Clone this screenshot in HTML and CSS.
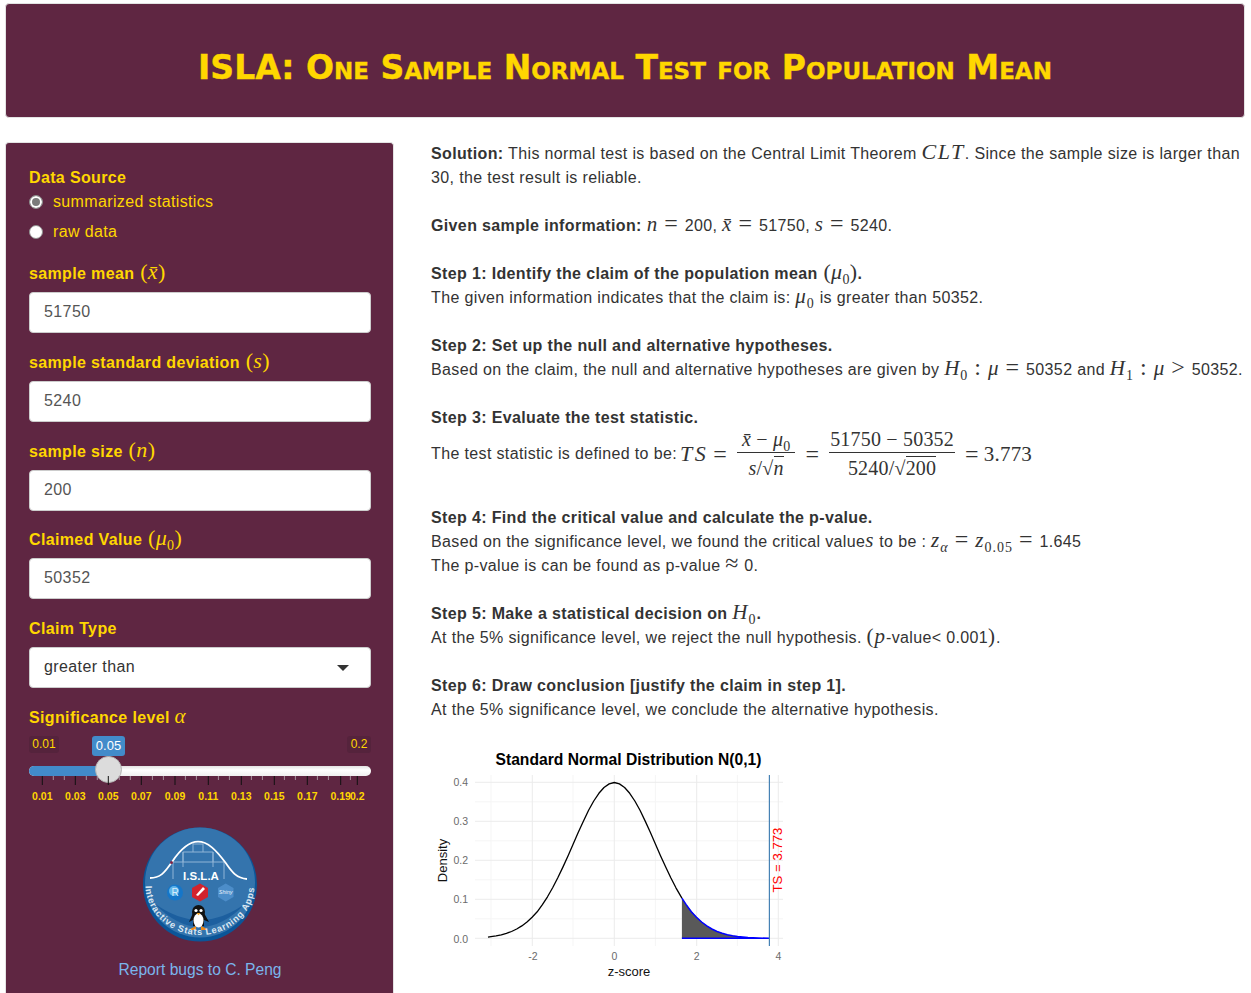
FILE: index.html
```html
<!DOCTYPE html>
<html lang="en">
<head>
    <meta charset="UTF-8">
    <meta name="viewport" content="width=device-width, initial-scale=1.0">
    <title>ISLA: One Sample Normal Test for Population Mean</title>
    <link rel="stylesheet" href="styles.css">
</head>
<body>
    <header class="title-panel">
        <h1 class="app-title">ISLA: One Sample Normal Test for Population Mean</h1>
    </header>

    <div class="layout">
        <aside class="sidebar">
            <div class="form-group">
                <div class="field-label tight">Data Source</div>
                <label class="radio-row"><input type="radio" name="source" checked><span>summarized statistics</span></label>
                <label class="radio-row"><input type="radio" name="source"><span>raw data</span></label>
            </div>

            <div class="form-group">
                <div class="field-label">sample mean <span class="m paren">(<i>x̄</i>)</span></div>
                <input class="text-input" type="text" value="51750">
            </div>

            <div class="form-group">
                <div class="field-label">sample standard deviation <span class="m paren">(<i>s</i>)</span></div>
                <input class="text-input" type="text" value="5240">
            </div>

            <div class="form-group short">
                <div class="field-label">sample size <span class="m paren">(<i>n</i>)</span></div>
                <input class="text-input" type="text" value="200">
            </div>

            <div class="form-group">
                <div class="field-label">Claimed Value <span class="m paren">(<i>μ</i><sub>0</sub>)</span></div>
                <input class="text-input" type="text" value="50352">
            </div>

            <div class="form-group">
                <div class="field-label">Claim Type</div>
                <div class="select-box">greater than</div>
            </div>

            <div class="form-group last">
                <div class="field-label">Significance level <span class="m"><i>α</i></span></div>
                <div class="slider">
                    <span class="slider-edge min">0.01</span>
                    <span class="slider-edge max">0.2</span>
                    <span class="slider-value">0.05</span>
                    <div class="slider-track"><div class="slider-fill"></div></div>
                    <div class="slider-handle"></div>
                    <svg class="slider-ticks" width="342" height="30" viewBox="0 0 342 30">
                        <path d="M24.3 0v4M35.3 0v4M57.3 0v4M68.3 0v4M90.3 0v4M101.3 0v4M123.4 0v4M134.4 0v4M156.4 0v4M167.4 0v4M189.4 0v4M200.4 0v4M222.4 0v4M233.4 0v4M255.4 0v4M266.4 0v4M288.4 0v4M299.4 0v4M321.4 0v4" stroke="#a5909b" fill="none"/>
                        <path d="M13.3 0v9M46.3 0v9M79.3 0v9M112.3 0v9M146 0v9M179.3 0v9M212.3 0v9M245.3 0v9M278.3 0v9M311.7 0v9M328.3 0v9" stroke="#111" fill="none"/>
                        <g class="tick-text">
                            <text x="13.3" y="24">0.01</text>
                            <text x="46.3" y="24">0.03</text>
                            <text x="79.3" y="24">0.05</text>
                            <text x="112.3" y="24">0.07</text>
                            <text x="146" y="24">0.09</text>
                            <text x="179.3" y="24">0.11</text>
                            <text x="212.3" y="24">0.13</text>
                            <text x="245.3" y="24">0.15</text>
                            <text x="278.3" y="24">0.17</text>
                            <text x="311.7" y="24">0.19</text>
                            <text x="328.3" y="24">0.2</text>
                        </g>
                    </svg>
                </div>
            </div>

            <svg class="logo" width="120" height="120" viewBox="0 0 120 120">
                <defs>
                    <path id="ringText" d="M5.5 60 A54.5 50 0 0 0 114.5 60"/>
                </defs>
                <circle cx="60" cy="59.5" r="57" fill="#0b5598"/>
                <circle cx="60" cy="57.5" r="55" fill="#3474ad"/>
                <path d="M14 78 Q60 112 106 78 Q60 126 14 78Z" fill="#1c5f9f"/>
                <path d="M33 54V37H43V27H53V19H63V27H73V37H84V54M43 37H73M43 27V42M73 27V42M53 27H63" fill="none" stroke="#8fb4d6" stroke-width="1"/>
                <path d="M10 53C22 53 26 45 32 37C40 25 48 16.7 58 16.7C68 16.7 76 25 85 37C91 45 95 53 107 54" fill="none" stroke="#fff" stroke-width="1.8"/>
                <circle cx="31.5" cy="37.5" r="1.5" fill="#7b2346"/>
                <text class="logo-name" x="61" y="54.5">I.S.L.A</text>
                <circle cx="35" cy="67.5" r="8" fill="#1576c9"/>
                <circle cx="34" cy="66" r="5" fill="#5fb4ea"/>
                <text class="logo-r" x="35" y="71">R</text>
                <path d="M60 58.5L68 63V72L60 76.5L52 72V63Z" fill="#d2232e"/>
                <path d="M56 70L63 62L65 64L58 71Z" fill="#fff"/>
                <path d="M85.7 58.5L93.5 63V72L85.7 76.5L78 72V63Z" fill="#4c8dc9"/>
                <text class="logo-shiny" x="85.7" y="69">Shiny</text>
                <path d="M50 104L56 101V105H50ZM67 104L61 101V105H67Z" fill="#ef8a17"/>
                <path d="M49 97L53 88H64L69 97L64 95V101H53V95Z" fill="#111"/>
                <ellipse cx="58.5" cy="87" rx="6.5" ry="7" fill="#111"/>
                <ellipse cx="58.5" cy="95.5" rx="5" ry="7" fill="#fff"/>
                <circle cx="56" cy="85.5" r="1.6" fill="#fff"/>
                <circle cx="61" cy="85.5" r="1.6" fill="#fff"/>
                <path d="M56.5 88H60.5L58.5 90.2Z" fill="#f2a01e"/>
                <text class="logo-ring"><textPath href="#ringText" startOffset="1" textLength="160">Interactive Stats Learning Apps</textPath></text>
            </svg>

            <a class="report-link" href="#">Report bugs to C. Peng</a>
        </aside>

        <main class="results">
            <p><b>Solution:</b> This normal test is based on the Central Limit Theorem <span class="m wide"><i>CLT</i></span>. Since the sample size is larger than 30, the test result is reliable.</p>

            <p><b>Given sample information:</b> <span class="m"><i>n</i></span><span class="m eq">=</span>200, <span class="m"><i>x̄</i></span><span class="m eq">=</span>51750, <span class="m"><i>s</i></span><span class="m eq">=</span>5240.</p>

            <p><b>Step 1: Identify the claim of the population mean <span class="m paren">(<i>μ</i><sub>0</sub>)</span>.</b><br>
            The given information indicates that the claim is: <span class="m"><i>μ</i><sub>0</sub></span> is greater than 50352.</p>

            <p><b>Step 2: Set up the null and alternative hypotheses.</b><br>
            Based on the claim, the null and alternative hypotheses are given by <span class="m"><i>H</i><sub>0</sub></span><span class="m eq">:</span><span class="m"><i>μ</i></span><span class="m eq">=</span>50352 and <span class="m"><i>H</i><sub>1</sub></span><span class="m eq">:</span><span class="m"><i>μ</i></span><span class="m eq">&gt;</span>50352.</p>

            <div class="step-formula">
                <b>Step 3: Evaluate the test statistic.</b>
                <div class="formula">
                    <span class="formula-text">The test statistic is defined to be:</span>
                    <span class="m ts"><i>TS</i></span><span class="m eq">=</span>
                    <span class="frac short-frac m"><span class="num"><i>x̄</i> − <i>μ</i><sub>0</sub></span><span class="den"><i>s</i>/√<span class="root"><i>n</i></span></span></span><span class="m eq">=</span>
                    <span class="frac m"><span class="num">51750 − 50352</span><span class="den">5240/√<span class="root">200</span></span></span><span class="m eq">=</span><span class="m">3.773</span>
                </div>
            </div>

            <p><b>Step 4: Find the critical value and calculate the p-value.</b><br>
            Based on the significance level, we found the critical value<span class="m"><i>s</i></span> to be : <span class="m"><i>z</i><sub><i>α</i></sub></span><span class="m eq">=</span><span class="m"><i>z</i><sub>0.05</sub></span><span class="m eq">=</span>1.645<br>
            The p-value is can be found as p-value <span class="m sym">≈</span> 0.</p>

            <p><b>Step 5: Make a statistical decision on <span class="m"><i>H</i><sub>0</sub></span>.</b><br>
            At the 5% significance level, we reject the null hypothesis. <span class="m">(<i>p</i></span>-value&lt; 0.001<span class="m">)</span>.</p>

            <p><b>Step 6: Draw conclusion [justify the claim in step 1].</b><br>
            At the 5% significance level, we conclude the alternative hypothesis.</p>

            <svg class="plot" width="370" height="248" viewBox="431 745 370 248">
                <path d="M475 918.8H783M475 879.8H783M475 840.8H783M475 801.8H783M491 775V946M573 775V946M655.4 775V946M737.4 775V946" stroke="#f5f5f5" fill="none"/>
                <path d="M475 938.3H783M475 899.3H783M475 860.3H783M475 821.3H783M475 782.3H783M532.3 775V946M614.3 775V946M696.7 775V946M778.3 775V946" stroke="#ebebeb" fill="none"/>
                <path d="M681.9 938.3V898.1L686.2 904.6L696.5 917.2L706.8 925.9L717.05 931.5L727.3 934.8L737.6 936.6L747.9 937.5L758.2 938L769.4 938.3Z" fill="#595959"/>
                <path d="M681.9 938.3H769.4M681.9 898.1L686.2 904.6L691.3 911.8L696.5 917.2L701.6 922L706.8 925.9L711.9 929L717.05 931.5L722.2 933.3L727.3 934.8L732.5 935.8L737.6 936.6L747.9 937.5L758.2 938L769.4 938.3" stroke="#0000ff" stroke-width="1.5" fill="none"/>
                <polyline points="488,937.1 491,936.6 496.1,935.8 501.3,934.8 506.4,933.3 511.55,931.5 516.7,929 521.8,925.9 527,922 532.1,917.2 537.2,911.8 542.4,904.6 547.5,896.8 552.65,887.8 557.8,877.8 562.9,867.1 568.1,855.7 573.2,843.9 578.3,832.2 583.5,820.9 588.6,810.3 593.75,801 598.9,793.3 604,787.5 609.16,783.9 614.3,782.5 619.44,783.9 624.6,787.5 629.7,793.3 634.85,801 640,810.3 645.1,820.9 650.3,832.2 655.4,843.9 660.5,855.7 665.7,867.1 670.8,877.8 675.95,887.8 681.9,898.1" fill="none" stroke="#000" stroke-width="1.3" stroke-linejoin="round"/>
                <path d="M769.4 775V946" stroke="#4682b4" stroke-width="1.2" fill="none"/>
                <text class="plot-title" x="628.5" y="765">Standard Normal Distribution N(0,1)</text>
                <g class="plot-y">
                    <text x="468" y="786">0.4</text>
                    <text x="468" y="825">0.3</text>
                    <text x="468" y="864">0.2</text>
                    <text x="468" y="903">0.1</text>
                    <text x="468" y="942.5">0.0</text>
                </g>
                <g class="plot-x">
                    <text x="533" y="960">-2</text>
                    <text x="614.3" y="960">0</text>
                    <text x="696.7" y="960">2</text>
                    <text x="778.3" y="960">4</text>
                </g>
                <text class="plot-axis" x="629" y="976">z-score</text>
                <text class="plot-axis" transform="translate(447 860.5) rotate(-90)">Density</text>
                <text class="plot-ts" transform="translate(782 860) rotate(-90)">TS = 3.773</text>
            </svg>
        </main>
    </div>
</body>
</html>
```

FILE: styles.css
```css
* {
  box-sizing: border-box;
}

html, body {
  height: 993px;
  overflow: hidden;
}

body {
  margin: 0;
  padding: 3px 6px 0 5px;
  background-color: #fff;
  color: #333;
  font-family: "Liberation Sans", Arial, sans-serif;
  font-size: 16px;
  line-height: 24px;
  letter-spacing: 0.36px;
}

.title-panel {
  height: 115px;
  background-color: #5f2642;
  border: 1px solid #e3e3e3;
  border-radius: 4px;
  display: flex;
  align-items: center;
  justify-content: center;
}

.app-title {
  margin: 0;
  padding-top: 14px;
  color: #ffd700;
  font-family: "DejaVu Sans", Verdana, sans-serif;
  font-size: 33px;
  font-weight: bold;
  font-variant: small-caps;
  line-height: 36px;
  letter-spacing: 0;
  -webkit-text-stroke: 0.4px #ffd700;
}

.layout {
  display: flex;
  align-items: flex-start;
  gap: 37px;
  margin-top: 24px;
}

/* left panel */
.sidebar {
  flex: 0 0 389px;
  height: 860px;
  padding: 22px 22px 0 23px;
  background-color: #5f2642;
  border: 1px solid #e3e3e3;
  border-bottom: 0;
  border-radius: 4px 4px 0 0;
}

.form-group {
  margin-bottom: 17px;
}

.form-group.short {
  margin-bottom: 16px;
}

.form-group.last {
  margin-bottom: 19px;
}

.field-label {
  height: 24px;
  margin-bottom: 7px;
  color: #ffd700;
  font-weight: bold;
  line-height: 26px;
  white-space: nowrap;
}

.field-label.tight {
  margin-bottom: 1px;
}

.radio-row {
  display: flex;
  align-items: center;
  height: 24px;
  margin-bottom: 6px;
  color: #ffd700;
}

.radio-row:last-child {
  margin-bottom: 0;
}

.radio-row input {
  appearance: none;
  width: 14px;
  height: 14px;
  margin: 0 10px 0 0;
  background-color: #fff;
  border: 1px solid #8f8f8f;
  border-radius: 50%;
}

.radio-row input:checked {
  background-color: #7b7b7b;
  box-shadow: inset 0 0 0 2px #fff;
}

.text-input, .select-box {
  display: block;
  width: 100%;
  height: 41px;
  padding: 0 14px 2px;
  background-color: #fff;
  border: 1px solid #ccc;
  border-radius: 4px;
  color: #555;
  font-family: "Liberation Sans", Arial, sans-serif;
  font-size: 16px;
  letter-spacing: 0.4px;
  line-height: 37px;
}

.select-box {
  position: relative;
  color: #333;
}

.select-box::after {
  content: "";
  position: absolute;
  top: 17px;
  right: 21px;
  border-style: solid;
  border-width: 6px 6px 0;
  border-color: #333 transparent transparent;
}

/* slider */
.slider {
  position: relative;
  height: 70px;
}

.slider-edge, .slider-value {
  position: absolute;
  top: 0;
  border-radius: 3px;
  text-align: center;
  letter-spacing: 0;
}

.slider-edge {
  height: 17px;
  background-color: #55233c;
  color: #ffd700;
  font-size: 12px;
  line-height: 16px;
}

.slider-edge.min {
  left: 0;
  width: 30px;
}

.slider-edge.max {
  right: 0;
  width: 24px;
}

.slider-value {
  left: 63px;
  width: 33px;
  height: 20px;
  background-color: #428bca;
  color: #fff;
  font-size: 13px;
  line-height: 20px;
}

.slider-track {
  position: absolute;
  top: 30px;
  left: 0;
  right: 0;
  height: 10px;
  background: linear-gradient(#e2e2e2, #fff 40%, #f0f0f0);
  border-radius: 5px;
  overflow: hidden;
}

.slider-fill {
  width: 80px;
  height: 100%;
  background-color: #428bca;
}

.slider-handle {
  position: absolute;
  top: 20px;
  left: 66px;
  width: 27px;
  height: 27px;
  background-color: #dcdcdc;
  border: 1px solid #b5b5b5;
  border-radius: 50%;
}

.slider-ticks {
  position: absolute;
  top: 40px;
  left: 0;
}

.tick-text text {
  fill: #ffd700;
  font-size: 10.5px;
  font-weight: bold;
  letter-spacing: 0;
  text-anchor: middle;
}

/* logo */
.logo {
  display: block;
  margin: 0 auto;
  letter-spacing: 0;
}

.logo-name {
  fill: #fff;
  font-size: 11.5px;
  font-weight: bold;
  text-anchor: middle;
}

.logo-r {
  fill: #d7ecfb;
  font-size: 10px;
  text-anchor: middle;
}

.logo-shiny {
  fill: #e3eefa;
  font-size: 5.5px;
  font-style: italic;
  text-anchor: middle;
}

.logo-ring {
  fill: #dce8f3;
  font-size: 9.2px;
  font-weight: bold;
}

.report-link {
  display: block;
  margin-top: 12px;
  color: #7ab5ec;
  font-size: 15.6px;
  line-height: 26px;
  letter-spacing: 0;
  text-align: center;
  text-decoration: none;
}

/* right panel */
.results {
  flex: 1;
  min-width: 0;
}

.results p {
  margin: 0 0 24px;
}

.m {
  font-family: "Liberation Serif", "DejaVu Serif", serif;
  font-size: 21px;
  font-weight: normal;
  letter-spacing: 1px;
  line-height: 0;
}

.m sub {
  font-size: 14px;
  line-height: 0;
}

.m.paren {
  margin-left: 1px;
  font-size: 22px;
  letter-spacing: 0.36px;
}

.eq {
  margin: 0 6px;
}

.m.eq, .m.sym {
  font-size: 24px;
}

.step-formula {
  margin-bottom: 28px;
}

.formula {
  display: flex;
  align-items: center;
  height: 48px;
  white-space: nowrap;
}

.formula-text {
  margin-right: 3px;
}

.formula .m {
  letter-spacing: 0.2px;
  line-height: 24px;
}

.formula .eq {
  margin: 0 5px;
}

.m.wide {
  font-size: 22px;
  letter-spacing: 1.5px;
}

.formula .m.ts {
  font-size: 22px;
  letter-spacing: 2.5px;
}

.frac {
  display: inline-flex;
  flex-direction: column;
  align-items: center;
  margin: 0 5px;
}

.formula > .frac {
  font-size: 20px;
}

.frac .num {
  width: 100%;
  padding: 0 1px 3px;
  border-bottom: 1px solid #333;
  text-align: center;
  line-height: 20px;
}

.short-frac .num {
  padding: 0 5px 3px;
}

.frac .den {
  padding-top: 4px;
  line-height: 22px;
}

.root {
  border-top: 1px solid #333;
}

.plot {
  display: block;
  margin-top: -1px;
  letter-spacing: 0;
}

.plot-title {
  fill: #000;
  font-size: 15.65px;
  font-weight: bold;
  text-anchor: middle;
}

.plot-y text {
  fill: #6b6b6b;
  font-size: 10.5px;
  text-anchor: end;
}

.plot-x text {
  fill: #6b6b6b;
  font-size: 10.5px;
  text-anchor: middle;
}

.plot-axis {
  fill: #111;
  font-size: 13px;
  text-anchor: middle;
}

.plot-ts {
  fill: #ff0000;
  font-size: 13.2px;
  text-anchor: middle;
}
```
